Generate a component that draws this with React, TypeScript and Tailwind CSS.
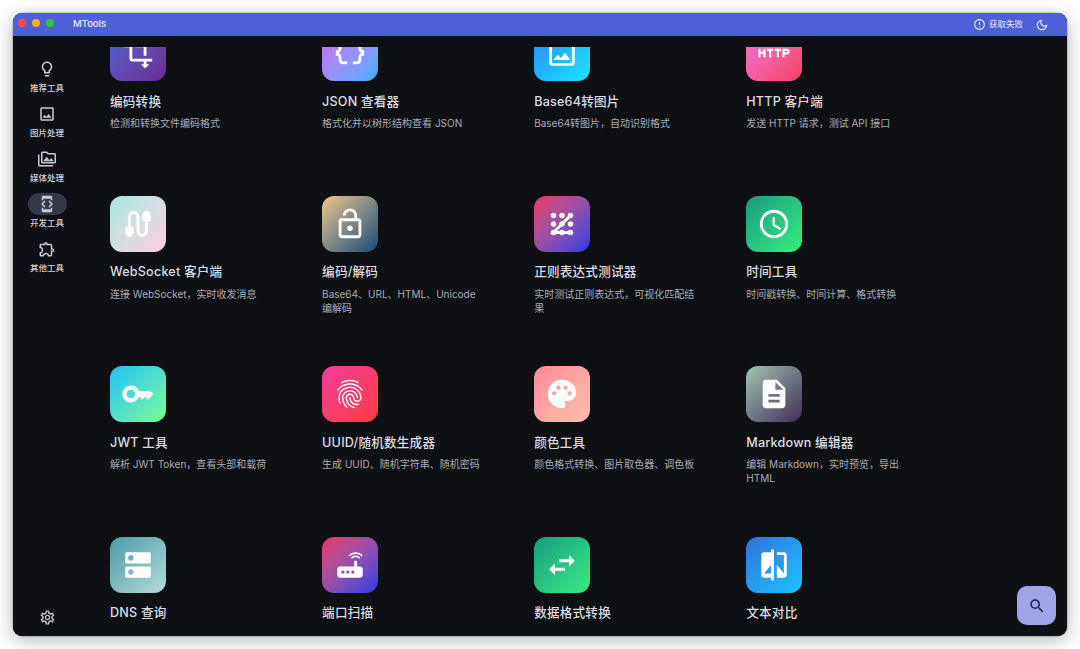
import type { IconType } from "react-icons";
import {
  MdAccessTime,
  MdCable,
  MdCompare,
  MdDataObject,
  MdDescription,
  MdDeveloperMode,
  MdDns,
  MdErrorOutline,
  MdFingerprint,
  MdHttp,
  MdKey,
  MdOutlineDarkMode,
  MdOutlineExtension,
  MdOutlineImage,
  MdOutlineLightbulb,
  MdOutlineLockOpen,
  MdOutlinePermMedia,
  MdOutlineSettings,
  MdPalette,
  MdPattern,
  MdRouter,
  MdSearch,
  MdSwapHoriz,
  MdTransform,
} from "react-icons/md";

const navItems: { label: string; icon: IconType; active?: boolean }[] = [
  { label: "推荐工具", icon: MdOutlineLightbulb },
  { label: "图片处理", icon: MdOutlineImage },
  { label: "媒体处理", icon: MdOutlinePermMedia },
  { label: "开发工具", icon: MdDeveloperMode, active: true },
  { label: "其他工具", icon: MdOutlineExtension },
];

const tools: { title: string; desc?: string; icon: IconType; tile: string }[] = [
  { title: "编码转换", desc: "检测和转换文件编码格式", icon: MdTransform, tile: "from-[#4a66d8] to-[#6a2c91]" },
  { title: "JSON 查看器", desc: "格式化并以树形结构查看 JSON", icon: MdDataObject, tile: "from-[#d060f0] to-[#20b0ff]" },
  { title: "Base64转图片", desc: "Base64转图片，自动识别格式", icon: MdOutlineImage, tile: "from-[#2d7fff] to-[#22e6ff]" },
  { title: "HTTP 客户端", desc: "发送 HTTP 请求，测试 API 接口", icon: MdHttp, tile: "from-[#f472e0] to-[#f5405f]" },
  { title: "WebSocket 客户端", desc: "连接 WebSocket，实时收发消息", icon: MdCable, tile: "from-[#a3e9e0] to-[#fbd0e0]" },
  { title: "编码/解码", desc: "Base64、URL、HTML、Unicode 编解码", icon: MdOutlineLockOpen, tile: "from-[#f0c888] to-[#134a72]" },
  { title: "正则表达式测试器", desc: "实时测试正则表达式，可视化匹配结果", icon: MdPattern, tile: "from-[#f02d60] to-[#3030e8]" },
  { title: "时间工具", desc: "时间戳转换、时间计算、格式转换", icon: MdAccessTime, tile: "from-[#1c9a80] to-[#38ef7d]" },
  { title: "JWT 工具", desc: "解析 JWT Token，查看头部和载荷", icon: MdKey, tile: "from-[#1cc0f5] to-[#7cfc90]" },
  { title: "UUID/随机数生成器", desc: "生成 UUID、随机字符串、随机密码", icon: MdFingerprint, tile: "from-[#f53a9a] to-[#ff3a3a]" },
  { title: "颜色工具", desc: "颜色格式转换、图片取色器、调色板", icon: MdPalette, tile: "from-[#ff8a96] to-[#fdc0b0]" },
  { title: "Markdown 编辑器", desc: "编辑 Markdown，实时预览，导出 HTML", icon: MdDescription, tile: "from-[#a0c8b0] to-[#432d58]" },
  { title: "DNS 查询", icon: MdDns, tile: "from-[#4a9aa8] to-[#b4dcd8]" },
  { title: "端口扫描", icon: MdRouter, tile: "from-[#f02d60] to-[#3030e8]" },
  { title: "数据格式转换", icon: MdSwapHoriz, tile: "from-[#1c9a80] to-[#38ef7d]" },
  { title: "文本对比", icon: MdCompare, tile: "from-[#3070d8] to-[#18c4ff]" },
];

function ToolCard({ title, desc, icon: Icon, tile }: (typeof tools)[number]) {
  return (
    <div className="pr-[48px]">
      <div className={`flex h-[56px] w-[56px] items-center justify-center rounded-[12px] bg-linear-to-br text-white ${tile}`}>
        <Icon size={34} />
      </div>
      <h3 className="mt-[11.5px] text-[12.6px] leading-[18px] font-medium tracking-[0.2px] text-[#dcdde2]">{title}</h3>
      {desc && <p className="mt-[5.5px] text-[10px] leading-[14px] text-[#abacb3]">{desc}</p>}
    </div>
  );
}

export default function App() {
  return (
    <div className="h-screen bg-white p-[13px] font-['Inter','Noto_Sans_CJK_SC',sans-serif]">
      <div className="relative flex h-full flex-col overflow-hidden rounded-[9px] bg-[#0e1014] shadow-[0_0_0_0.5px_rgba(0,0,0,0.25),0_4px_18px_rgba(0,0,0,0.3)]">
        <header className="flex h-[23px] shrink-0 items-center bg-[#4f5fd5] text-[#e6e9ff]">
          <div className="-mt-[4px] flex gap-[6px] pl-[5px]">
            <span className="h-[8px] w-[8px] rounded-full bg-[#ff4b47]" />
            <span className="h-[8px] w-[8px] rounded-full bg-[#ffae22]" />
            <span className="h-[8px] w-[8px] rounded-full bg-[#2ac63f]" />
          </div>
          <span className="ml-[19px] text-[9.5px] font-medium">MTools</span>
          <div className="ml-auto flex items-center pr-[18px]">
            <MdErrorOutline size={13} />
            <span className="ml-[3px] text-[8.5px]">获取失败</span>
            <MdOutlineDarkMode size={14} className="ml-[12px]" />
          </div>
        </header>
        <div className="flex min-h-0 flex-1">
          <aside className="flex w-[68px] shrink-0 flex-col items-center bg-[#0f1015] pt-[22px] pb-[10px]">
            {navItems.map(({ label, icon: Icon, active }) => (
              <div key={label} className="flex h-[45px] flex-col items-center">
                <div className={`flex h-[22px] w-[39px] items-center justify-center rounded-full text-[#c9cad6] ${active ? "bg-[#353848]" : ""}`}>
                  <Icon size={18} />
                </div>
                <span className="mt-[2px] text-[8.5px] leading-[12px] font-medium text-[#d0d1d8]">{label}</span>
              </div>
            ))}
            <MdOutlineSettings size={17} className="mt-auto text-[#c0c1cc]" />
          </aside>
          <main className="min-w-0 flex-1 overflow-hidden py-[11px] pl-[29px]">
            <div className="h-full overflow-hidden">
              <div className="-mt-[21.6px] grid w-[849px] auto-rows-[170.5px] grid-cols-[repeat(4,212.1px)]">
                {tools.map((tool) => (
                  <ToolCard key={tool.title} {...tool} />
                ))}
              </div>
            </div>
          </main>
        </div>
        <button className="absolute right-[11px] bottom-[11px] flex h-[39px] w-[39px] items-center justify-center rounded-[10px] bg-[#9fa4e6] text-[#1c1f4a]">
          <MdSearch size={18} />
        </button>
      </div>
    </div>
  );
}
